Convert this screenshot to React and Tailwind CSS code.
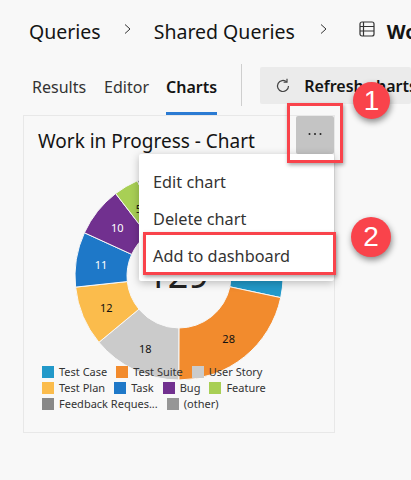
const font = { fontFamily: '"Noto Sans", "Open Sans", sans-serif' };

const CX = 106, CY = 106, R = 104, r = 52;
const total = 129;
const slices = [
  { v: 15, c: '#2299c9', label: '15', fill: '#fff' },
  { v: 28, c: '#f28b2d', label: '28', fill: '#111' },
  { v: 18, c: '#cbcbcb', label: '18', fill: '#111' },
  { v: 12, c: '#fbbc4c', label: '12', fill: '#111' },
  { v: 11, c: '#1e78c8', label: '11', fill: '#fff' },
  { v: 10, c: '#71308f', label: '10', fill: '#fff' },
  { v: 5, c: '#a8cf55', label: '5', fill: '#111' },
  { v: 20, c: '#888888', label: '20', fill: '#fff' },
  { v: 10, c: '#969696', label: '10', fill: '#fff' },
];
const START = 102 - (15 / total) * 360;
function pt(rad, a) {
  const t = ((a - 90) * Math.PI) / 180;
  return [CX + rad * Math.cos(t), CY + rad * Math.sin(t)];
}
function arc(a0, a1) {
  const [x0, y0] = pt(R, a0), [x1, y1] = pt(R, a1), [x2, y2] = pt(r, a1), [x3, y3] = pt(r, a0);
  const large = a1 - a0 > 180 ? 1 : 0;
  return `M${x0} ${y0}A${R} ${R} 0 ${large} 1 ${x1} ${y1}L${x2} ${y2}A${r} ${r} 0 ${large} 0 ${x3} ${y3}Z`;
}

function Donut() {
  let a = START;
  return (
    <svg width="212" height="212" viewBox="0 0 212 212" className="block mx-auto">
      {slices.map((s, i) => {
        const a0 = a, a1 = a + (s.v / total) * 360;
        a = a1;
        const [lx, ly] = pt(79, (a0 + a1) / 2);
        return (
          <g key={i}>
            <path d={arc(a0, a1)} fill={s.c} stroke="#f8f8f8" strokeWidth="1" />
            <text x={lx} y={ly + 5.5} textAnchor="middle" fontSize="11" fill={s.fill} fontFamily='"Noto Sans", sans-serif'>{s.label}</text>
          </g>
        );
      })}
      <text x={CX - 1} y={CY + 12} textAnchor="middle" fontSize="36" fill="#222" fontFamily='"Noto Sans", sans-serif'>129</text>
    </svg>
  );
}

function Legend({ color, children }) {
  return (
    <div className="flex items-center gap-[5px] mr-[9px]">
      <span className="w-[12px] h-[12px] block shrink-0" style={{ background: color }} />
      <span>{children}</span>
    </div>
  );
}

function Badge({ n, className }) {
  return (
    <div className={"absolute rounded-full bg-[#f9434b] text-white flex items-center justify-center text-[28px] font-['Liberation_Sans'] shadow-[1px_3px_6px_rgba(0,0,0,0.45)] " + className}>
      {n}
    </div>
  );
}

export default function App() {
  return (
    <div className="relative w-[411px] h-[480px] overflow-hidden bg-[#f8f8f8] text-[#141414]" style={font}>
      {/* breadcrumb */}
      <div className="flex items-center h-[64px] pl-[29px] text-[19.5px] whitespace-nowrap">
        <span className="shrink-0">Queries</span>
        <svg width="10" height="12" viewBox="0 0 10 12" className="ml-[21px] mr-[22px] -mt-[6px] shrink-0" fill="none" stroke="#333" strokeWidth="1">
          <path d="M3 1.5 8 6l-5 4.5" />
        </svg>
        <span className="shrink-0">Shared Queries</span>
        <svg width="10" height="12" viewBox="0 0 10 12" className="ml-[23px] mr-[31px] -mt-[6px] shrink-0" fill="none" stroke="#333" strokeWidth="1">
          <path d="M3 1.5 8 6l-5 4.5" />
        </svg>
        <svg width="16" height="16" viewBox="0 0 16 16" className="mr-[12px] -mt-[7px] shrink-0" fill="none" stroke="#333" strokeWidth="1.2">
          <rect x="1" y="1" width="14" height="14" rx="2" />
          <path d="M1 5.5h14M1 10h14M4.5 1V15" />
        </svg>
        <span className="font-bold shrink-0">Work in Progress</span>
      </div>

      {/* tabs */}
      <div className="flex items-start h-[51px] pl-[32px] whitespace-nowrap">
        <span className="text-[16px] mt-[11px] text-[#333]">Results</span>
        <span className="text-[16px] mt-[11px] ml-[18px] text-[#333]">Editor</span>
        <div className="ml-[17px] h-[51px] border-b-[3px] border-[#2b7bd3] pt-[11px]">
          <span className="text-[16px] font-semibold block">Charts</span>
        </div>
        <div className="ml-[24px] w-px h-[42px] bg-[#cfcfcf]" />
        <div className="ml-[18px] mt-[3px] h-[37px] flex-1 bg-[#ebebeb] rounded-[2px] flex items-center pl-[15px] gap-[13px] min-w-0">
          <svg width="16" height="16" viewBox="0 0 16 16" fill="none" stroke="#444" strokeWidth="1.2" className="shrink-0">
            <path d="M13.5 8a5.5 5.5 0 1 1-1.8-4.1" />
            <path d="M12 0.8v3.4H8.6" />
          </svg>
          <span className="text-[16px] font-semibold">Refresh charts</span>
        </div>
      </div>

      {/* card */}
      <div className="ml-[23px] w-[312px] h-[318px] border border-[#e8e8e8] bg-[#f8f8f8]">
        <div className="flex items-start h-[38px]">
          <span className="ml-[14px] mt-[10px] text-[19px] leading-[30px] whitespace-nowrap">Work in Progress - Chart</span>
          <div className="ml-auto w-[38px] h-[38px] bg-[#c4c4c4] rounded-[2px] flex items-center justify-center">
            <svg width="14" height="4" viewBox="0 0 14 4" fill="#222" className="-mt-[2px]">
              <circle cx="1.5" cy="2" r="1" />
              <circle cx="7" cy="2" r="1" />
              <circle cx="12.5" cy="2" r="1" />
            </svg>
          </div>
        </div>
        <div className="mt-[16px]">
          <Donut />
        </div>
        <div className="-mt-[18px] pl-[18px] pr-[4px] text-[11px] leading-[16px] text-[#333]">
          <div className="flex">
            <Legend color="#2299c9">Test Case</Legend>
            <Legend color="#f28b2d">Test Suite</Legend>
            <Legend color="#cbcbcb">User Story</Legend>
          </div>
          <div className="flex">
            <Legend color="#fbbc4c">Test Plan</Legend>
            <Legend color="#1e78c8">Task</Legend>
            <Legend color="#71308f">Bug</Legend>
            <Legend color="#a8cf55">Feature</Legend>
          </div>
          <div className="flex">
            <Legend color="#888888">Feedback Reques...</Legend>
            <Legend color="#969696">(other)</Legend>
          </div>
        </div>
      </div>

      {/* context menu */}
      <div className="absolute left-[139px] top-[154px] w-[195px] h-[127px] bg-white rounded-[2px] shadow-[0_2px_8px_rgba(0,0,0,0.25)] text-[16.3px] text-[#333]">
        <div className="h-[37px] mt-[10px] pl-[14px] flex items-center">Edit chart</div>
        <div className="h-[37px] pl-[14px] flex items-center">Delete chart</div>
        <div className="h-[37px] pl-[14px] flex items-center">Add to dashboard</div>
      </div>

      {/* annotations */}
      <div className="absolute left-[287px] top-[103px] w-[56px] h-[60px] border-[3px] border-[#f9434b] shadow-[1px_2px_4px_rgba(0,0,0,0.35)]" />
      <div className="absolute left-[143px] top-[232px] w-[193px] h-[43px] border-[3px] border-[#f9434b] shadow-[1px_2px_4px_rgba(0,0,0,0.35)]" />
      <Badge n="1" className="left-[353px] top-[82px] w-[37px] h-[37px]" />
      <Badge n="2" className="left-[351px] top-[217px] w-[40px] h-[40px]" />
    </div>
  );
}
